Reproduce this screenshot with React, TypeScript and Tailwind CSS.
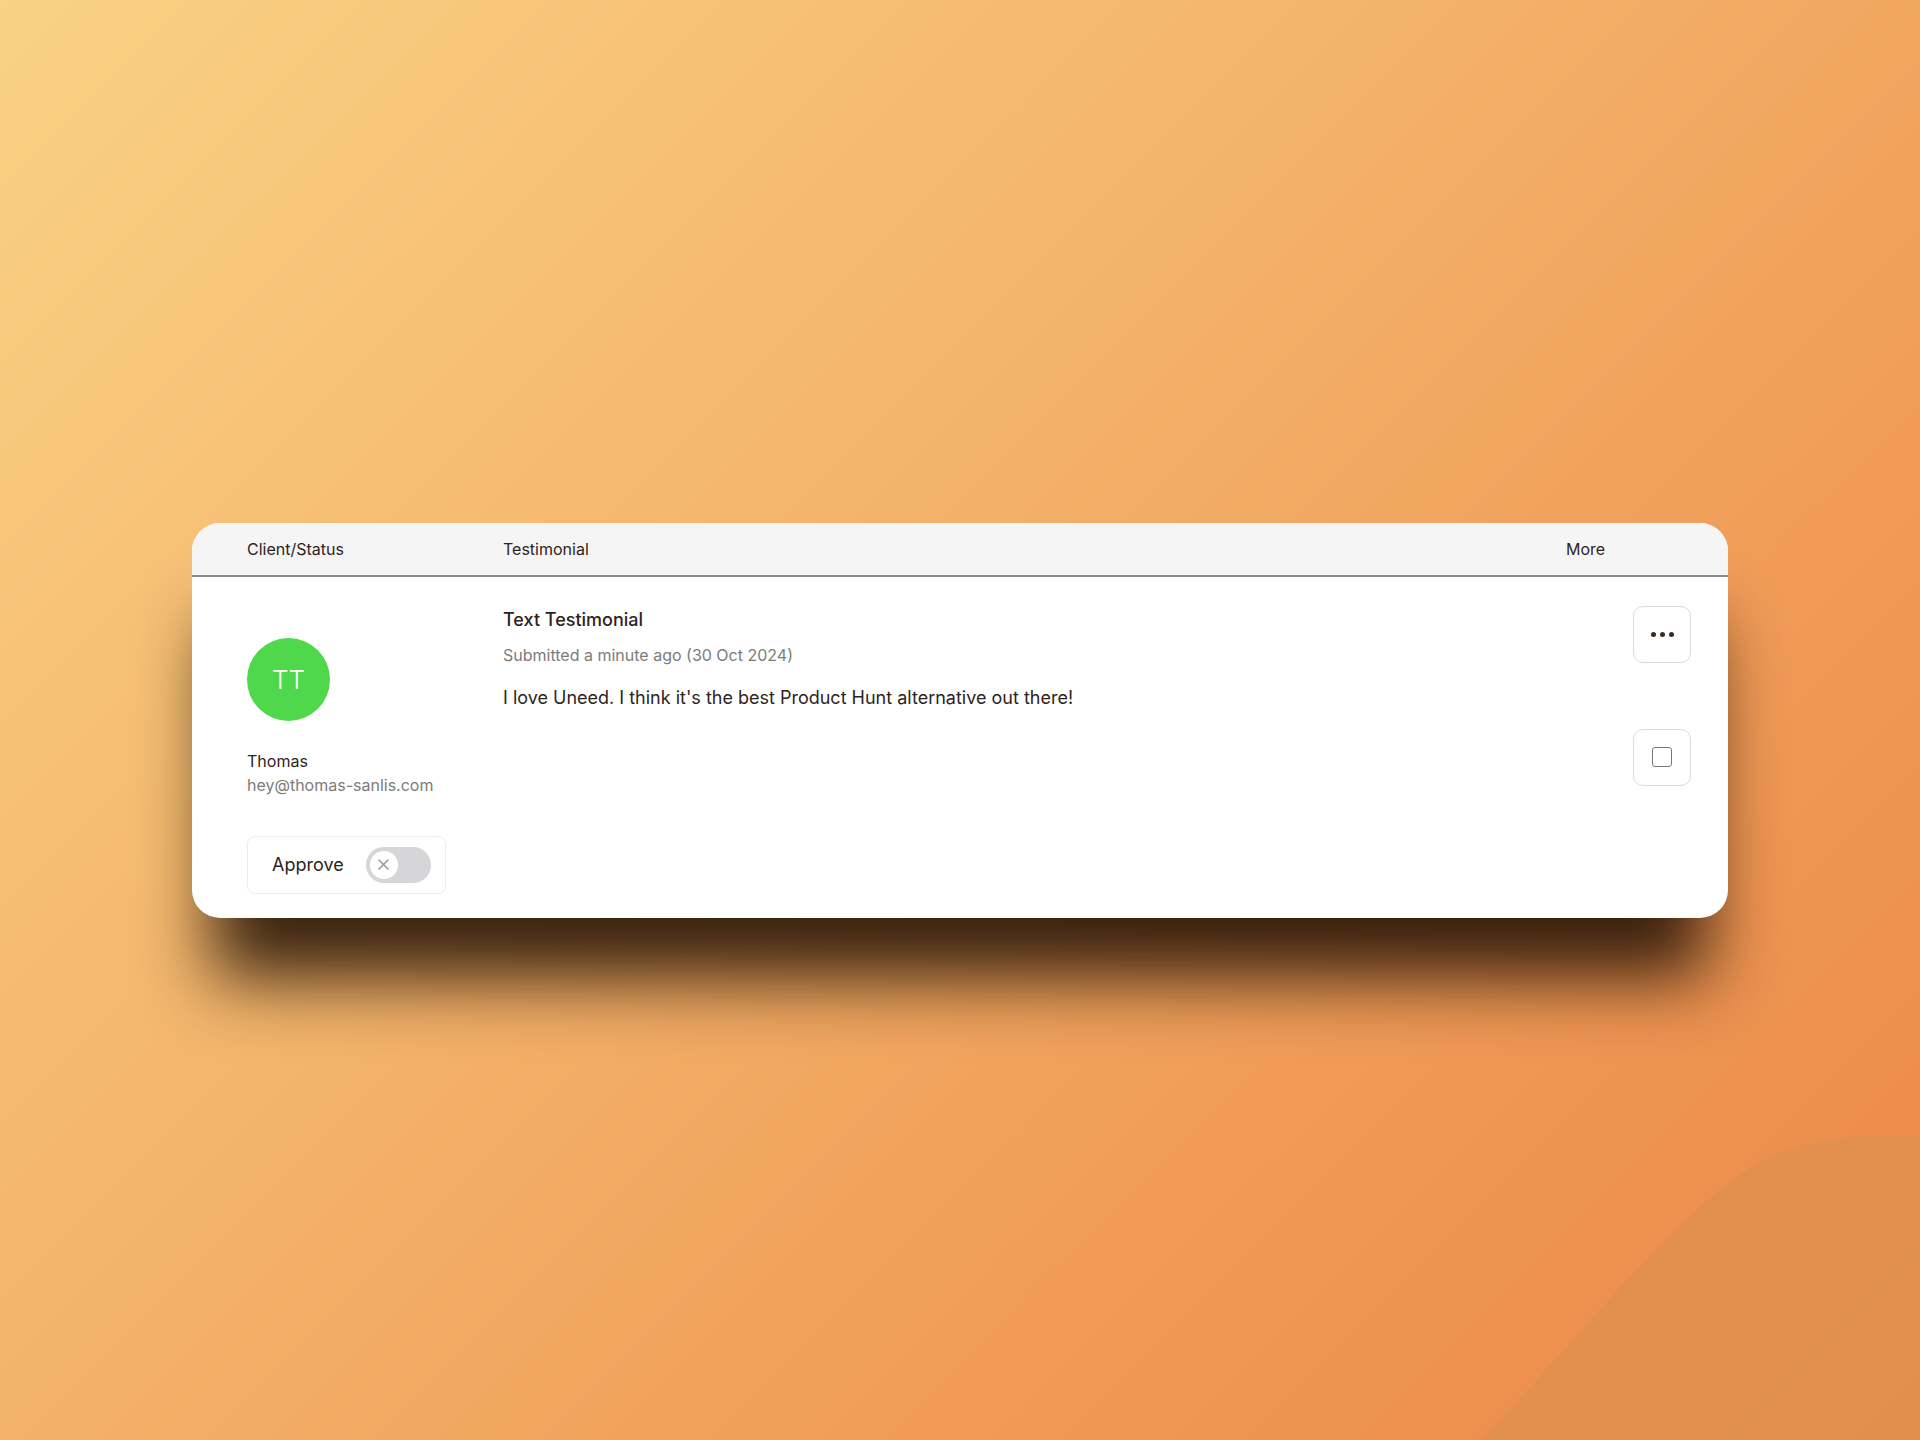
import React, { useState } from 'react';

// Testimonial row card on a warm gradient backdrop
const font = { fontFamily: 'Inter, "Noto Sans", sans-serif' };

const App: React.FC = () => {
  const [approved, setApproved] = useState<boolean>(false);
  const [checked, setChecked] = useState<boolean>(false);

  return (
    <div
      className="relative flex h-[1440px] w-full items-center justify-center overflow-hidden bg-[linear-gradient(135deg,#f9d283_0%,#f4b46b_40%,#f09c58_70%,#ec8646_100%)]"
      style={font}
    >
      {/* soft wave in the bottom-right corner */}
      <svg className="absolute bottom-0 right-0" width="440" height="305" viewBox="0 0 440 305">
        <path d="M0 305 C 115 190, 220 40, 315 12 C 345 4, 385 0, 440 0 L 440 305 Z" fill="#e0904f" fillOpacity="0.85" />
      </svg>

      <div className="relative z-10 w-[1536px] overflow-hidden rounded-[28px] bg-white shadow-[0_80px_70px_-20px_rgba(35,18,6,0.9)]">
        {/* header */}
        <div className="flex h-[54px] items-center border-b-2 border-[#8a8a8a] bg-[#f5f5f5] text-[16px] text-[#2e241d]">
          <div className="w-[311px] pl-[55px]">Client/Status</div>
          <div className="flex-1">Testimonial</div>
          <div className="w-[162px]">More</div>
        </div>

        {/* row */}
        <div className="flex pb-[24px] pt-[29px]">
          <div className="flex w-[311px] flex-col pl-[55px]">
            <div className="mt-[32px] flex h-[83px] w-[83px] items-center justify-center rounded-full bg-[#4fd84b] text-[26px] font-light text-white">
              TT
            </div>
            <div className="mt-[28px] text-[16px] leading-6 text-[#2e241d]">Thomas</div>
            <div className="text-[16px] leading-6 text-[#7e7b79]">hey@thomas-sanlis.com</div>
            <div className="mt-[39px] flex h-[58px] w-[199px] items-center rounded-lg border border-[#ececec] pl-[24px]">
              <span className="text-[18px] text-[#2e241d]">Approve</span>
              <button
                onClick={() => setApproved(!approved)}
                className={`ml-[22px] flex h-[36px] w-[65px] items-center rounded-full px-[4px] ${approved ? 'justify-end bg-[#4fd84b]' : 'bg-[#d6d6d8]'}`}
              >
                <span className="flex h-[28px] w-[28px] items-center justify-center rounded-full bg-white">
                  <svg width="13" height="13" viewBox="0 0 13 13">
                    <path d="M2 2 L11 11 M11 2 L2 11" stroke="#9a9a9a" strokeWidth="1.6" strokeLinecap="round" />
                  </svg>
                </span>
              </button>
            </div>
          </div>

          <div className="flex flex-1 flex-col">
            <div className="text-[18px] font-medium leading-7 text-[#2e241d]">Text Testimonial</div>
            <div className="mt-[10px] text-[16px] leading-[22px] text-[#7e7b79]">
              Submitted a minute ago (30 Oct 2024)
            </div>
            <div className="mt-[18px] text-[18px] leading-7 text-[#2e241d]">
              I love Uneed. I think it's the best Product Hunt alternative out there!
            </div>
          </div>

          <div className="flex flex-col pr-[37px]">
            <button className="flex h-[57px] w-[58px] items-center justify-center gap-[4px] rounded-[10px] border border-[#dadada]">
              <span className="h-[5px] w-[5px] rounded-full bg-[#3a2a20]" />
              <span className="h-[5px] w-[5px] rounded-full bg-[#3a2a20]" />
              <span className="h-[5px] w-[5px] rounded-full bg-[#3a2a20]" />
            </button>
            <button
              onClick={() => setChecked(!checked)}
              className="mt-[66px] flex h-[57px] w-[58px] items-center justify-center rounded-[10px] border border-[#dadada]"
            >
              <span className={`h-[20px] w-[20px] rounded-[3px] border-[1.5px] border-[#777] ${checked ? 'bg-[#777]' : ''}`} />
            </button>
          </div>
        </div>
      </div>
    </div>
  );
};

export default App;
